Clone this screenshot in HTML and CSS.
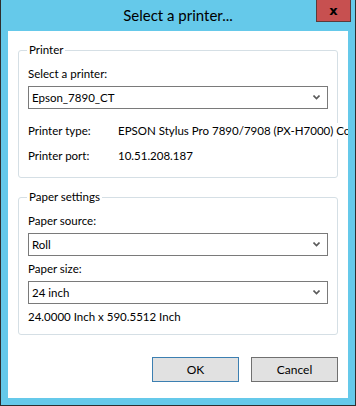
FILE: index.html
```html
<!DOCTYPE html>
<html lang="en">
<head>
    <meta charset="UTF-8">
    <title>Select a printer...</title>
    <link rel="stylesheet" href="styles.css">
</head>
<body>
    <div class="window">
        <!-- Barra de título -->
        <div class="titlebar">
            <span class="title">Select a printer...</span>
            <button class="close">x</button>
        </div>

        <div class="client">
            <!-- Impressora -->
            <div class="group">
                <span class="group-title">Printer</span>
                <div class="label">Select a printer:</div>
                <div class="combo">
                    <span>Epson_7890_CT</span>
                    <svg class="chevron" width="7" height="5" viewBox="0 0 7 5"><path d="M0.5 0.5 L3.5 3.5 L6.5 0.5" fill="none" stroke="#5a5a5a" stroke-width="1.6"/></svg>
                </div>
                <div class="info-row first">
                    <span class="info-key">Printer type:</span>
                    <span class="info-value">EPSON Stylus Pro 7890/7908 (PX-H7000) Color</span>
                </div>
                <div class="info-row">
                    <span class="info-key">Printer port:</span>
                    <span class="info-value">10.51.208.187</span>
                </div>
            </div>

            <!-- Papel -->
            <div class="group paper">
                <span class="group-title">Paper settings</span>
                <div class="label">Paper source:</div>
                <div class="combo">
                    <span>Roll</span>
                    <svg class="chevron" width="7" height="5" viewBox="0 0 7 5"><path d="M0.5 0.5 L3.5 3.5 L6.5 0.5" fill="none" stroke="#5a5a5a" stroke-width="1.6"/></svg>
                </div>
                <div class="label">Paper size:</div>
                <div class="combo">
                    <span>24 inch</span>
                    <svg class="chevron" width="7" height="5" viewBox="0 0 7 5"><path d="M0.5 0.5 L3.5 3.5 L6.5 0.5" fill="none" stroke="#5a5a5a" stroke-width="1.6"/></svg>
                </div>
                <div class="label">24.0000 Inch x 590.5512 Inch</div>
            </div>

            <div class="buttons">
                <button class="btn default">OK</button>
                <button class="btn">Cancel</button>
            </div>
        </div>
    </div>
</body>
</html>
```

FILE: styles.css
```css
body {
    margin: 0;
    font-family: Lato, "Open Sans", sans-serif;
    font-size: 11.5px;
    color: #000;
}

.window {
    width: 356px;
    height: 406px;
    box-sizing: border-box;
    background-color: #65c9ea;
    border: 1px solid #2e2e2e;
    border-top: none;
    display: flex;
    flex-direction: column;
}

.titlebar {
    height: 31px;
    display: grid;
    grid-template-columns: 1fr auto 1fr;
}

.title {
    grid-column: 2;
    font-size: 15px;
    line-height: 30px;
    color: #000;
}

.close {
    grid-column: 3;
    justify-self: end;
    align-self: start;
    width: 35px;
    height: 22px;
    margin-right: 4px;
    padding: 0;
    background-color: #c75050;
    border: 1px solid #5b3a3a;
    border-top: none;
    color: #000;
    font-family: "DejaVu Sans", sans-serif;
    font-weight: bold;
    font-size: 13px;
    line-height: 18px;
}

.client {
    flex: 1;
    margin: 0 7px 7px;
    background-color: #fff;
    padding: 19px 10px 0;
    overflow: hidden;
}

.group {
    position: relative;
    border: 1px solid #d5dfe5;
    border-radius: 3px;
    padding: 15px 9px 13px;
}

.group.paper {
    margin-top: 19px;
    padding-bottom: 9px;
}

.group-title {
    position: absolute;
    top: -9px;
    left: 8px;
    padding: 0 2px;
    background-color: #fff;
    line-height: 16px;
}

.label {
    line-height: 16px;
}

.combo {
    height: 21px;
    margin: 4px 0 5px;
    border: 1px solid #7a7a7a;
    display: flex;
    align-items: center;
    justify-content: space-between;
    padding: 0 7px 0 3px;
}

.chevron {
    display: block;
}

.info-row {
    display: flex;
    line-height: 16px;
    margin-top: 9px;
    white-space: nowrap;
}

.info-row.first {
    margin-top: 14px;
}

.info-key {
    width: 90px;
    flex-shrink: 0;
}

.info-value {
    background-color: #fff;
    position: relative;
}

.buttons {
    display: flex;
    justify-content: flex-end;
    gap: 12px;
    margin-top: 22px;
}

.btn {
    width: 87px;
    height: 25px;
    padding: 0;
    background-color: #e1e1e1;
    border: 1px solid #707070;
    font-family: Lato, "Open Sans", sans-serif;
    font-size: 12px;
    color: #000;
}

.btn.default {
    border-color: #3c7fb1;
}
```
